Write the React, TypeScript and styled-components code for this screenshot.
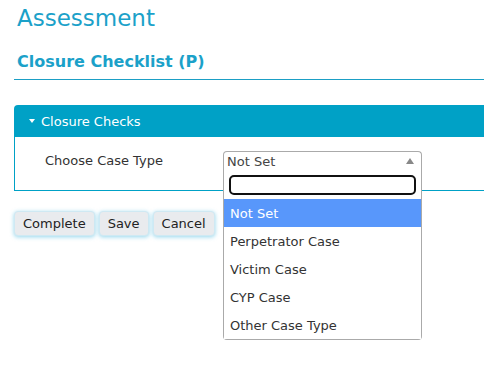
import React from "react";
import styled, { createGlobalStyle } from "styled-components";

const Global = createGlobalStyle`
  html, body { margin: 0; padding: 0; background: #fff; }
  body { font-family: "DejaVu Sans", Verdana, sans-serif; color: #333; overflow: hidden; }
  * { box-sizing: border-box; }
`;

const Page = styled.div`
  padding: 0 0 0 14px;
  width: 484px;
  height: 383px;
`;

const Title = styled.h1`
  margin: 0;
  padding: 4px 0 0 3px;
  font-size: 23px;
  line-height: 28px;
  font-weight: normal;
  color: #1ba1c9;
`;

const SectionTitle = styled.h2`
  margin: 20px 0 0 0;
  padding: 0 0 7px 3px;
  font-size: 16px;
  line-height: 20px;
  font-weight: bold;
  color: #1ba1c9;
  border-bottom: 1px solid #1b9fc5;
`;

const Panel = styled.section`
  margin-top: 25px;
  border: 1px solid #00a1c6;
  border-right: none;
  border-top-left-radius: 4px;
`;

const PanelHeader = styled.div`
  height: 31px;
  background: #00a1c6;
  color: #fff;
  display: flex;
  align-items: center;
  gap: 6px;
  padding-left: 14px;
  font-size: 13px;
`;

const Caret = styled.span`
  width: 0;
  height: 0;
  border-left: 3.5px solid transparent;
  border-right: 3.5px solid transparent;
  border-top: 4px solid #fff;
  margin-top: -2px;
`;

const PanelBody = styled.div`
  display: grid;
  grid-template-columns: 178px 199px;
  align-items: start;
  height: 53px;
  padding: 14px 0 0 30px;
  font-size: 13px;
`;

const Label = styled.span`
  color: #333;
  line-height: 20px;
`;

const SelectWrap = styled.div`
  position: relative;
  width: 199px;
`;

const SelectBox = styled.div`
  height: 20px;
  border: 1px solid #aaa;
  border-bottom-color: #ccc;
  border-radius: 4px 4px 0 0;
  display: flex;
  align-items: center;
  justify-content: space-between;
  padding: 0 7px 0 3px;
  color: #444;
  font-size: 13px;
  background: #fff;
`;

const UpArrow = styled.span`
  width: 0;
  height: 0;
  border-left: 4px solid transparent;
  border-right: 4px solid transparent;
  border-bottom: 6px solid #888;
`;

const Dropdown = styled.div`
  position: absolute;
  top: 19px;
  left: 0;
  width: 199px;
  background: #fff;
  border: 1px solid #aaa;
  border-top: none;
  border-radius: 0 0 4px 4px;
  z-index: 10;
`;

const SearchRow = styled.div`
  padding: 5px 5px 4px 5px;
`;

const SearchInput = styled.div`
  height: 20px;
  border: 2px solid #111;
  border-radius: 5px;
`;

const Option = styled.div<{ $active?: boolean }>`
  height: 28px;
  display: flex;
  align-items: center;
  padding-left: 6px;
  font-size: 13px;
  color: ${(p) => (p.$active ? "#fff" : "#333")};
  background: ${(p) => (p.$active ? "#5897fb" : "#fff")};
`;

const Actions = styled.div`
  display: flex;
  gap: 4px;
  margin-top: 20px;
`;

const Button = styled.button`
  height: 25px;
  padding: 0 8px;
  font-family: "DejaVu Sans", Verdana, sans-serif;
  font-size: 13px;
  color: #222;
  background: #e9ebee;
  border: 1px solid #cfe9f3;
  border-radius: 4px;
  box-shadow: 0 1px 4px rgba(60, 180, 220, 0.55);
`;

const options = ["Not Set", "Perpetrator Case", "Victim Case", "CYP Case", "Other Case Type"];

export default function App() {
  return (
    <>
      <Global />
      <Page>
        <Title>Assessment</Title>
        <SectionTitle>Closure Checklist (P)</SectionTitle>
        <Panel>
          <PanelHeader>
            <Caret />
            <span>Closure Checks</span>
          </PanelHeader>
          <PanelBody>
            <Label>Choose Case Type</Label>
            <SelectWrap>
              <SelectBox>
                <span>Not Set</span>
                <UpArrow />
              </SelectBox>
              <Dropdown>
                <SearchRow>
                  <SearchInput />
                </SearchRow>
                {options.map((o, i) => (
                  <Option key={o} $active={i === 0}>
                    {o}
                  </Option>
                ))}
              </Dropdown>
            </SelectWrap>
          </PanelBody>
        </Panel>
        <Actions>
          <Button>Complete</Button>
          <Button>Save</Button>
          <Button>Cancel</Button>
        </Actions>
      </Page>
    </>
  );
}
